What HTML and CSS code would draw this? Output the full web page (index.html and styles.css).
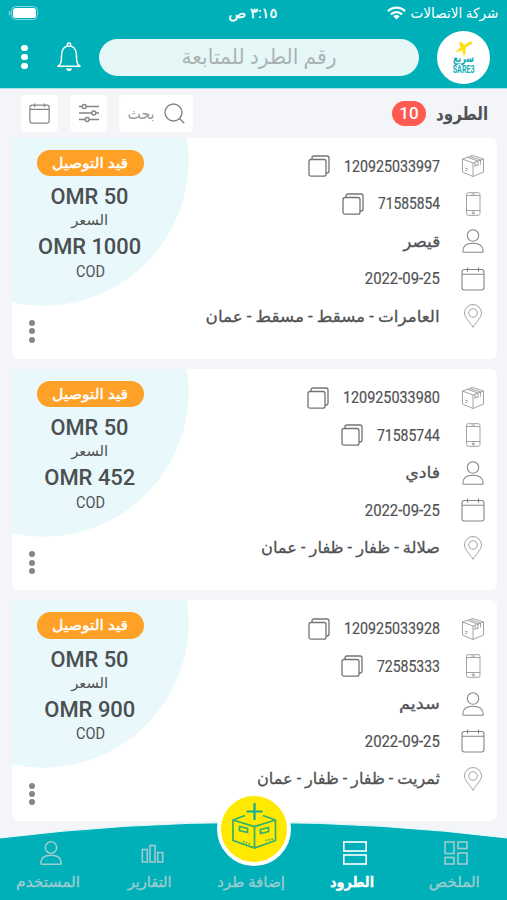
FILE: index.html
```html
<!DOCTYPE html>
<html lang="ar" dir="rtl">
<head>
<meta charset="utf-8">
<title>الطرود</title>
<link rel="stylesheet" href="styles.css">
</head>
<body>
<svg class="defs" width="0" height="0" aria-hidden="true">
  <symbol id="box" viewBox="0 0 24 24"><path d="M12 1.500 22.500 5v13L12 22.500 1.500 18V5zM1.500 5 12 9l10.500-4M12 9v13.500M6.500 3.300 17 7v5l-2-1.200-1 1.700V8.200M9 2.500 19.500 6v4.500M4 14l3 1.200M4 16.200l2 .8"/></symbol>
  <symbol id="phone" viewBox="0 0 24 24"><rect x="5.500" y=".7" width="13.500" height="22.600" rx="1.800"/><path d="M5.500 3.500H19M5.500 18.500H19M10.500 2.100h3.500M11.300 20h2v1.800h-2z"/></symbol>
  <symbol id="user" viewBox="0 0 24 24"><circle cx="12" cy="6.500" r="5.700"/><path d="M2.800 23.200h18.400q1.100 0 1-1.200C22 17 18 14.300 12 14.300S2 17 1.800 22q0 1.200 1 1.200z"/></symbol>
  <symbol id="calendar" viewBox="0 0 24 24"><rect x="1" y="2.500" width="22" height="20.500" rx="2.500"/><path d="M1 7.300h22M6.500.5v4.200M17.500.5v4.200"/></symbol>
  <symbol id="pin" viewBox="0 0 24 24"><path d="M12 23.300C9 18 3.500 13.500 3.500 9a8.500 8.500 0 0 1 17 0c0 4.500-5.500 9-8.500 14.300z"/><circle cx="12" cy="9" r="4.300"/></symbol>
  <symbol id="copy" viewBox="0 0 22 22"><rect x="1" y="4.500" width="17" height="16.700" rx="2"/><path d="M4 4.200V3q0-2 2-2h13q2 0 2 2v13q0 2-2 2h-1"/></symbol>
</svg>

<div class="app">
  <header class="header">
    <div class="status">
      <div class="carrier">
        <span class="fit" data-w="88"><span>شركة الاتصالات</span></span>
        <svg width="19" height="14" viewBox="0 0 19 14" fill="none" stroke="#fff" stroke-width="2.300"><path d="M1 5.200a12 12 0 0 1 17 0M4 8.400a7.800 7.800 0 0 1 11 0"/><path d="M9.500 13.500 6.300 10.300a4.500 4.500 0 0 1 6.400 0z" fill="#fff" stroke="none"/></svg>
      </div>
      <div class="time"><span class="fit" data-w="49"><span>٣:١٥ ص</span></span></div>
      <svg class="battery" width="30" height="14" viewBox="0 0 30 14"><rect x="3.500" y=".5" width="26" height="13" rx="4" fill="none" stroke="#7fd8dc"/><rect x="5" y="2" width="23" height="10" rx="2.500" fill="#fff"/><path d="M1.500 5v4" stroke="#7fd8dc" stroke-width="1.500"/></svg>
    </div>
    <div class="topbar">
      <div class="logo">
        <svg width="19" height="17" viewBox="0 0 19 17"><path d="M1 13 6.500 8.500 5 3.500l2.200-.8L10.500 6l4.500-3q3-1 3.300.5.200 1-2.500 2.500l-4 2.500-.5 7-2 .9-1-5.200-4 1.600z" fill="#ffde17"/></svg>
        <span class="fit logo-ar" data-w="21"><span>سريع</span></span>
        <span class="fit logo-en" data-w="22"><span>SARE3</span></span>
      </div>
      <div class="search"><span class="fit" data-w="155"><span>رقم الطرد للمتابعة</span></span></div>
      <svg class="bell" width="24" height="30" viewBox="0 0 24 30" fill="none" stroke="#fff" stroke-width="1.500"><path d="M1 24.200h22c-3-2-3.500-4-3.500-10.500 0-5.500-2.500-9.700-7.500-9.700s-7.500 4.200-7.500 9.700C4.500 20.200 4 22.200 1 24.200z" stroke-linejoin="round"/><path d="M10.300 4V2.700a1.700 1.700 0 0 1 3.400 0V4"/><path d="M9 26.500h6q-.5 2.500-3 2.500t-3-2.500z" fill="#fff" stroke="none"/></svg>
      <div class="dots light"><i></i><i></i><i></i></div>
    </div>
  </header>

  <section class="toolbar">
    <h1><span class="fit" data-w="52"><span>الطرود</span></span></h1>
    <span class="count">10</span>
    <div class="tools">
      <div class="tool find">
        <svg width="21" height="21" viewBox="0 0 21 21" class="line"><circle cx="9.500" cy="9.500" r="8.500"/><path d="m15.500 15.500 4.700 4.700"/></svg>
        <span class="fit" data-w="27"><span>بحث</span></span>
      </div>
      <div class="tool"><svg width="20" height="20" viewBox="0 0 20 20" class="line"><path d="M0 3.500h3.200M7.200 3.500H20M0 10h12.800M16.800 10H20M0 16.500h6.200M10.200 16.500H20"/><circle cx="5.200" cy="3.500" r="2"/><circle cx="14.800" cy="10" r="2"/><circle cx="8.200" cy="16.500" r="2"/></svg></div>
      <div class="tool"><svg width="21" height="21" class="line"><use href="#calendar"/></svg></div>
    </div>
  </section>

  <main class="cards">
    <article class="card">
      <ul class="details">
        <li><svg class="ico faint"><use href="#box"/></svg><span class="fit num" data-w="96"><span>120925033997</span></span><svg class="copy"><use href="#copy"/></svg></li>
        <li><svg class="ico faint"><use href="#phone"/></svg><span class="fit num" data-w="62"><span>71585854</span></span><svg class="copy"><use href="#copy"/></svg></li>
        <li><svg class="ico"><use href="#user"/></svg><span class="fit" data-w="37"><span>قيصر</span></span></li>
        <li><svg class="ico"><use href="#calendar"/></svg><span class="fit date" data-w="75"><span>2022-09-25</span></span></li>
        <li><svg class="ico faint"><use href="#pin"/></svg><span class="fit" data-w="234"><span>العامرات - مسقط - مسقط - عمان</span></span></li>
      </ul>
      <div class="price">
        <div class="pill"><span class="fit" data-w="76"><span>قيد التوصيل</span></span></div>
        <div class="amount"><span class="fit" data-w="78"><span>OMR 50</span></span></div>
        <div class="label"><span class="fit" data-w="37"><span>السعر</span></span></div>
        <div class="amount"><span class="fit" data-w="103"><span>OMR 1000</span></span></div>
        <div class="label cod"><span class="fit" data-w="29"><span>COD</span></span></div>
        <div class="dots"><i></i><i></i><i></i></div>
      </div>
    </article>
    <article class="card">
      <ul class="details">
        <li><svg class="ico faint"><use href="#box"/></svg><span class="fit num" data-w="97"><span>120925033980</span></span><svg class="copy"><use href="#copy"/></svg></li>
        <li><svg class="ico faint"><use href="#phone"/></svg><span class="fit num" data-w="63"><span>71585744</span></span><svg class="copy"><use href="#copy"/></svg></li>
        <li><svg class="ico"><use href="#user"/></svg><span class="fit" data-w="35"><span>فادي</span></span></li>
        <li><svg class="ico"><use href="#calendar"/></svg><span class="fit date" data-w="75"><span>2022-09-25</span></span></li>
        <li><svg class="ico faint"><use href="#pin"/></svg><span class="fit" data-w="179"><span>صلالة - ظفار - ظفار - عمان</span></span></li>
      </ul>
      <div class="price">
        <div class="pill"><span class="fit" data-w="76"><span>قيد التوصيل</span></span></div>
        <div class="amount"><span class="fit" data-w="78"><span>OMR 50</span></span></div>
        <div class="label"><span class="fit" data-w="37"><span>السعر</span></span></div>
        <div class="amount"><span class="fit" data-w="91"><span>OMR 452</span></span></div>
        <div class="label cod"><span class="fit" data-w="29"><span>COD</span></span></div>
        <div class="dots"><i></i><i></i><i></i></div>
      </div>
    </article>
    <article class="card">
      <ul class="details">
        <li><svg class="ico faint"><use href="#box"/></svg><span class="fit num" data-w="96"><span>120925033928</span></span><svg class="copy"><use href="#copy"/></svg></li>
        <li><svg class="ico faint"><use href="#phone"/></svg><span class="fit num" data-w="63"><span>72585333</span></span><svg class="copy"><use href="#copy"/></svg></li>
        <li><svg class="ico"><use href="#user"/></svg><span class="fit" data-w="41"><span>سديم</span></span></li>
        <li><svg class="ico"><use href="#calendar"/></svg><span class="fit date" data-w="75"><span>2022-09-25</span></span></li>
        <li><svg class="ico faint"><use href="#pin"/></svg><span class="fit" data-w="183"><span>ثمريت - ظفار - ظفار - عمان</span></span></li>
      </ul>
      <div class="price">
        <div class="pill"><span class="fit" data-w="76"><span>قيد التوصيل</span></span></div>
        <div class="amount"><span class="fit" data-w="78"><span>OMR 50</span></span></div>
        <div class="label"><span class="fit" data-w="37"><span>السعر</span></span></div>
        <div class="amount"><span class="fit" data-w="91"><span>OMR 900</span></span></div>
        <div class="label cod"><span class="fit" data-w="29"><span>COD</span></span></div>
        <div class="dots"><i></i><i></i><i></i></div>
      </div>
    </article>
  </main>

  <nav class="nav">
    <svg class="curve" width="507" height="78" viewBox="0 0 507 78"><path d="M-2 16.200Q253.500-15.500 509 16.200V80H-2z" fill="#00b0b9" stroke="#e8fbfc" stroke-width="1"/></svg>
    <div class="tabs">
      <div class="tab"><svg width="24" height="24" viewBox="0 0 24 24"><rect x="1" y="1" width="9" height="11.500"/><rect x="14" y="1" width="9" height="6.500"/><rect x="1" y="16.500" width="9" height="6.500"/><rect x="14" y="12" width="9" height="11"/></svg><span class="fit" data-w="51"><span>الملخص</span></span></div>
      <div class="tab active"><svg width="24" height="24" viewBox="0 0 24 24"><rect x=".8" y="1" width="22.400" height="9"/><rect x=".8" y="14" width="22.400" height="9"/></svg><span class="fit" data-w="44"><span>الطرود</span></span></div>
      <div class="tab"><div class="spacer"></div><span class="fit" data-w="68"><span>إضافة طرد</span></span></div>
      <div class="tab"><svg width="24" height="24" viewBox="0 0 24 24"><rect x="2.300" y="8.500" width="5" height="12.500"/><rect x="10" y="4.500" width="5" height="16.500"/><rect x="17.700" y="11.500" width="5" height="9.500"/></svg><span class="fit" data-w="44"><span>التقارير</span></span></div>
      <div class="tab"><svg width="24" height="24"><use href="#user"/></svg><span class="fit" data-w="64"><span>المستخدم</span></span></div>
    </div>
    <div class="fab"><svg width="46" height="50" viewBox="0 0 46 50" fill="none" stroke="#2fb06e" stroke-width="1.700"><path d="M14 13.500 2 18v20.500L23.500 46 44.500 38.500V18L32 13.500M2 18l21.500 6.500L44.500 18M23.500 24.500V46"/><path d="M8.500 24.500l8 2v4l-8-2zM29.500 27.500l8-2v4l-8 2z"/><path d="M12 39.500l8.500 3M34.500 38.500l7.500-1.500" stroke-dasharray="1.500 1.500"/><path d="M23.500 1v17M15.500 9.500h16" stroke="#13ab93" stroke-width="2.200"/></svg></div>
  </nav>
</div>
<script src="fit.js"></script>
</body>
</html>
```
FILE: styles.css
```css
* { box-sizing: border-box; }
body {
  margin: 0;
  background: #f4f5f8;
  color: #505254;
  font-family: Roboto, "DejaVu Sans", sans-serif;
}
svg { display: block; flex: none; }
.defs { position: absolute; }
.app {
  position: relative;
  width: 507px;
  height: 900px;
  overflow: hidden;
}
.fit {
  display: inline-block;
  direction: rtl;
  white-space: nowrap;
  flex: none;
  text-align: right;
}
.fit > span {
  display: inline-block;
  transform-origin: right center;
}

.header {
  height: 89px;
  background: #00b0b9;
  border-bottom: 1px solid #a9e4e8;
  color: #fff;
}
.status {
  height: 26px;
  display: grid;
  grid-template-columns: 1fr auto 1fr;
  align-items: center;
  padding: 0 9px 0 8px;
  font-size: 14px;
}
.carrier { display: flex; align-items: center; gap: 4px; }
.time { font-size: 14px; -webkit-text-stroke: .3px #fff; }
.battery { justify-self: end; }
.topbar {
  display: flex;
  align-items: center;
  height: 62px;
  padding: 0 17px 0 21px;
}
.logo {
  width: 53px;
  height: 53px;
  border-radius: 50%;
  background: #fff;
  display: flex;
  flex-direction: column;
  align-items: center;
  padding-top: 8px;
  color: #12adb5;
  font-weight: bold;
}
.logo svg { margin-bottom: -4px; }
.logo-ar { font-size: 12px; line-height: 13px; }
.logo-en { font-size: 10px; line-height: 9px; }
.search {
  width: 320px;
  height: 37px;
  margin-right: 18px;
  border-radius: 19px;
  background: #e6f7f8;
  color: #aab3b4;
  display: flex;
  align-items: center;
  justify-content: center;
  font-size: 21px;
}
.bell { margin-right: 18px; }
.dots {
  display: flex;
  flex-direction: column;
  gap: 2.300px;
}
.dots i { width: 6px; height: 6px; border-radius: 50%; background: #858585; }
.light { margin-right: auto; }
.light i { width: 6.500px; height: 6.500px; background: #fff; }

.toolbar {
  height: 48.500px;
  display: flex;
  align-items: center;
  padding: 0 19px 0 21px;
}
h1 { margin: 0; font-size: 18px; font-weight: bold; display: flex; }
.count {
  margin-right: 10px;
  width: 34px;
  height: 25px;
  border-radius: 13px;
  background: #ff5a50;
  color: #fff;
  font-size: 17px;
  font-weight: 500;
  line-height: 25px;
  text-align: center;
}
.tools { display: flex; gap: 12px; margin-right: auto; }
.tool {
  width: 37px;
  height: 37px;
  border-radius: 5px;
  background: #fff;
  display: flex;
  align-items: center;
  justify-content: center;
}
.find { width: 74px; gap: 9px; color: #999; font-size: 16px; }
.line { fill: none; stroke: #858585; stroke-width: 1.400; }

.cards {
  display: flex;
  flex-direction: column;
  gap: 10px;
  padding: 0 10px 0 12px;
}
.card {
  height: 221.300px;
  border-radius: 6px;
  display: flex;
  justify-content: space-between;
  background: radial-gradient(circle 146px at 31px 22px, #e9f8fb 99.500%, transparent 100%) #fff;
}
.details {
  list-style: none;
  margin: 0;
  padding: 10px 12.500px 0 0;
  font-size: 16px;
  -webkit-text-stroke: .3px #505254;
}
.details li { display: flex; align-items: center; height: 37.500px; }
.ico {
  width: 24px;
  height: 24px;
  margin-left: 20.500px;
  fill: none;
  stroke: #858585;
  stroke-width: 1.100;
}
.faint { stroke: #999; stroke-width: .9; }
.copy {
  width: 22px;
  height: 22px;
  margin-right: 14.500px;
  fill: none;
  stroke: #747474;
  stroke-width: 1.300;
}
.num, .date { font-size: 16px; -webkit-text-stroke-width: .2px; }
.price {
  width: 156px;
  padding: 12px 0 0;
  display: flex;
  flex-direction: column;
  align-items: center;
}
.pill {
  width: 107px;
  height: 26.500px;
  border-radius: 14px;
  background: #ffa027;
  color: #fff;
  display: flex;
  align-items: center;
  justify-content: center;
  font-size: 14px;
  -webkit-text-stroke: .4px #fff;
}
.amount {
  height: 26px;
  margin-top: 7px;
  font-size: 22.500px;
  line-height: 26px;
  font-weight: 500;
  color: #4a4f52;
}
.label { height: 17px; line-height: 17px; font-size: 14px; margin-top: 3px; margin-bottom: -3px; }
.label.cod { font-size: 16px; margin-top: 3.500px; }
.price .dots { align-self: flex-end; margin: 43.500px 0 0 17px; }

.nav { position: absolute; inset: auto 0 0 0; height: 78px; }
.curve { position: absolute; inset: 0; }
.tabs {
  position: relative;
  display: grid;
  grid-template-columns: repeat(5, 101.400px);
  padding-top: 19px;
}
.tab {
  display: flex;
  flex-direction: column;
  align-items: center;
  gap: 9px;
  color: #9fcbd0;
  font-size: 14.500px;
  line-height: 18px;
  -webkit-text-stroke: .3px currentColor;
}
.tab svg { fill: none; stroke: currentColor; stroke-width: 1.600; }
.tab .fit { margin-right: 5px; }
.tab.active { color: #fff; }
.tab.active .fit { font-weight: bold; }
.spacer { height: 24px; }
.fab {
  position: absolute;
  left: 217px;
  top: -30px;
  width: 74px;
  height: 74px;
  border-radius: 50%;
  border: 4px solid #fff;
  background: #ffe900;
  display: flex;
  justify-content: center;
  padding-top: 6px;
}
```
FILE: fit.js
```javascript
// Scales every label horizontally to the width reserved for it.
document.querySelectorAll('.fit').forEach(function (el) {
  var inner = el.firstElementChild;
  var w = Number(el.dataset.w);
  var natural = inner.getBoundingClientRect().width;
  el.style.width = w + 'px';
  inner.style.transform = 'scaleX(' + w / natural + ')';
});
```
